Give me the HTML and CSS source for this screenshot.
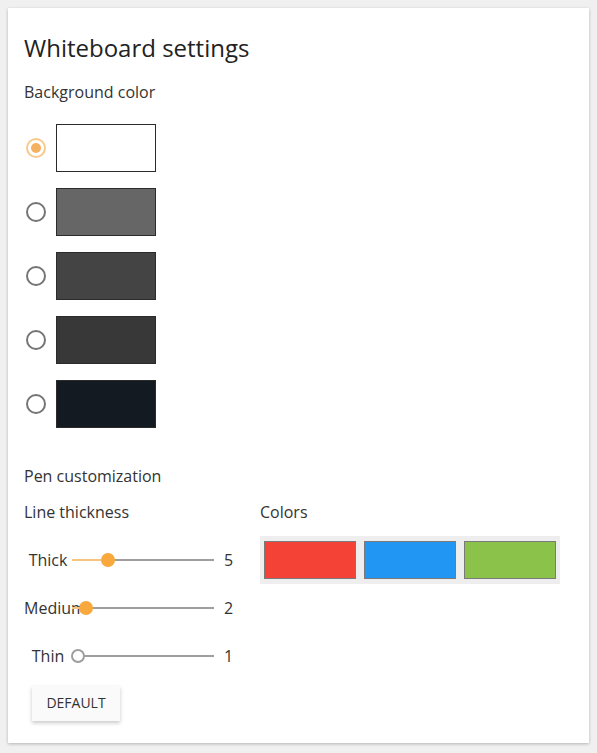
FILE: index.html
```html
<!DOCTYPE html>
<html lang="en">
<head>
<meta charset="utf-8">
<title>Whiteboard settings</title>
<link rel="stylesheet" href="styles.css">
</head>
<body>
<div class="card">
  <h1 class="title">Whiteboard settings</h1>
  <div class="label">Background color</div>
  <div class="bg-list">
    <div class="bg-row"><span class="radio checked"></span><span class="bg-swatch" style="background:#ffffff"></span></div>
    <div class="bg-row"><span class="radio"></span><span class="bg-swatch" style="background:#666666"></span></div>
    <div class="bg-row"><span class="radio"></span><span class="bg-swatch" style="background:#444444"></span></div>
    <div class="bg-row"><span class="radio"></span><span class="bg-swatch" style="background:#383838"></span></div>
    <div class="bg-row"><span class="radio"></span><span class="bg-swatch" style="background:#131a22"></span></div>
  </div>
  <div class="label pen-label">Pen customization</div>
  <div class="pen">
    <div class="thickness">
      <div class="label sub-label">Line thickness</div>
      <div class="slider-row">
        <span class="slider-name">Thick</span>
        <span class="track"><span class="fill" style="width:36px"></span><span class="thumb" style="left:36px"></span></span>
        <span class="value">5</span>
      </div>
      <div class="slider-row">
        <span class="slider-name">Medium</span>
        <span class="track"><span class="fill" style="width:14px"></span><span class="thumb" style="left:14px"></span></span>
        <span class="value">2</span>
      </div>
      <div class="slider-row">
        <span class="slider-name">Thin</span>
        <span class="track"><span class="thumb empty" style="left:6px"></span></span>
        <span class="value">1</span>
      </div>
    </div>
    <div class="colors">
      <div class="label sub-label">Colors</div>
      <div class="palette">
        <span class="pen-swatch" style="background:#f44336"></span>
        <span class="pen-swatch" style="background:#2196f3"></span>
        <span class="pen-swatch" style="background:#8bc34a"></span>
      </div>
    </div>
  </div>
  <button class="btn">DEFAULT</button>
</div>
</body>
</html>
```
FILE: styles.css
```css
html, body {
  margin: 0;
  padding: 0;
  background: #f0f0f0;
}
body {
  padding: 8px;
  font-family: "Open Sans", "Noto Sans", sans-serif;
  color: #333333;
}
.card {
  width: 581px;
  height: 735px;
  box-sizing: border-box;
  background: #ffffff;
  box-shadow: 0 1px 3px rgba(0,0,0,0.25);
  padding: 24px 16px 22px 16px;
}
.title {
  margin: 0;
  font-size: 24px;
  font-weight: 400;
  line-height: 32px;
  color: #222222;
}
.label {
  font-size: 16px;
  line-height: 24px;
}
.title + .label {
  margin-top: 16px;
}
.bg-list {
  margin-top: 20px;
  display: flex;
  flex-direction: column;
  gap: 16px;
}
.bg-row {
  display: flex;
  align-items: center;
  height: 48px;
}
.radio {
  width: 20px;
  height: 20px;
  box-sizing: border-box;
  border: 2px solid #757575;
  border-radius: 50%;
  margin-left: 2px;
  margin-right: 10px;
  position: relative;
}
.radio.checked {
  border-color: #f8c98c;
}
.radio.checked::after {
  content: "";
  position: absolute;
  left: 3px;
  top: 3px;
  width: 10px;
  height: 10px;
  border-radius: 50%;
  background: #f4b160;
}
.bg-swatch {
  width: 100px;
  height: 48px;
  box-sizing: border-box;
  border: 1px solid #2b2b2b;
}
.pen-label {
  margin-top: 36px;
}
.pen {
  display: flex;
  margin-top: 12px;
}
.thickness {
  width: 236px;
}
.colors {
  width: 300px;
}
.sub-label {
  margin-bottom: 12px;
}
.slider-row {
  display: flex;
  align-items: center;
  height: 48px;
}
.slider-name {
  width: 48px;
  text-align: center;
  font-size: 16px;
  line-height: 24px;
  white-space: nowrap;
  position: relative;
}
.track {
  width: 142px;
  height: 2px;
  background: #9e9e9e;
  position: relative;
}
.fill {
  position: absolute;
  left: 0;
  top: 0;
  height: 2px;
  background: #f7c57e;
}
.thumb {
  position: absolute;
  top: 1px;
  width: 14px;
  height: 14px;
  margin-left: -7px;
  margin-top: -7px;
  border-radius: 50%;
  background: #f8a83c;
  z-index: 2;
}
.thumb.empty {
  box-sizing: border-box;
  background: #ffffff;
  border: 2px solid #9e9e9e;
}
.value {
  margin-left: 10px;
  font-size: 16px;
  line-height: 24px;
}
.palette {
  display: flex;
  gap: 8px;
  width: 300px;
  height: 48px;
  box-sizing: border-box;
  padding: 5px 4px;
  background: #eeeeee;
}
.pen-swatch {
  width: 92px;
  height: 38px;
  box-sizing: border-box;
  border: 1px solid #7a7a7a;
}
.btn {
  display: block;
  margin: 6px 0 0 8px;
  width: 88px;
  height: 35px;
  border: none;
  background: #fafafa;
  box-shadow: 0 2px 4px rgba(0,0,0,0.22);
  font-family: "Open Sans", "Noto Sans", sans-serif;
  font-size: 14px;
  line-height: 20px;
  color: #333333;
  padding: 0 0 1px 0;
}
```
